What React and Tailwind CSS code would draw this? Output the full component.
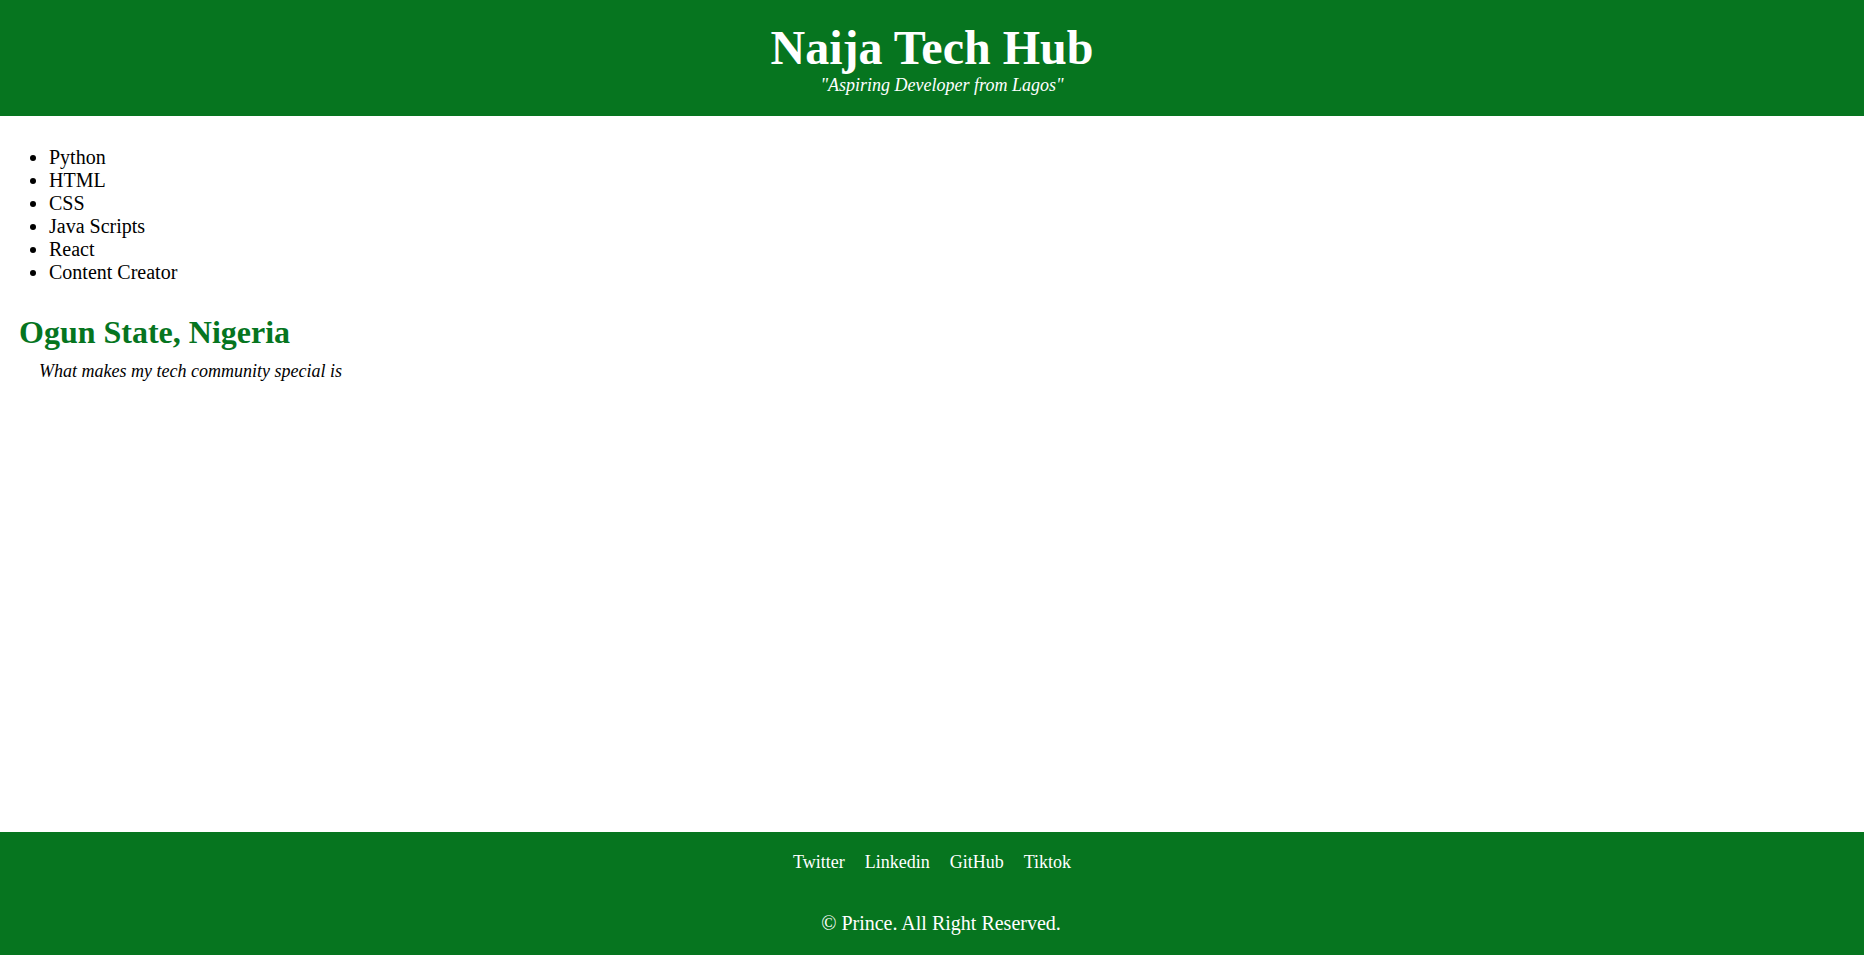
import React from 'react'

const skills = ['Python', 'HTML', 'CSS', 'Java Scripts', 'React', 'Content Creator']
const links = ['Twitter', 'Linkedin', 'GitHub', 'Tiktok']

function App() {
  return (
    <div className="min-h-screen flex flex-col bg-white text-black font-['Liberation_Serif','Times_New_Roman',serif]">
      {/* Header */}
      <header className="bg-[#06751f] text-white text-center pt-[21px] pb-[20px]">
        <h1 className="text-[48px] leading-[53px] font-bold">Naija Tech Hub</h1>
        <p className="text-[18px] leading-[22px] italic pl-[20px]">"Aspiring Developer from Lagos"</p>
      </header>

      {/* Main */}
      <main className="flex-1">
        <ul className="list-disc pl-[49px] mt-[30px] text-[20px] leading-[23px]">
          {skills.map((s) => (
            <li key={s}>{s}</li>
          ))}
        </ul>

        <section className="pl-[19px] mt-[30px]">
          <h2 className="text-[32px] leading-[36px] font-bold text-[#06751f]">Ogun State, Nigeria</h2>
          <p className="mt-[10px] ml-[20px] text-[18px] leading-[22px] italic">What makes my tech community special is</p>
        </section>
      </main>

      {/* Footer */}
      <footer className="bg-[#06751f] text-white text-center pt-[19px] pb-[20px]">
        <nav className="flex justify-center gap-[20px] text-[18px] leading-[22px]">
          {links.map((l) => (
            <a key={l} href="#">{l}</a>
          ))}
        </nav>
        <p className="mt-[38px] pl-[18px] text-[20px] leading-[24px]">© Prince. All Right Reserved.</p>
      </footer>
    </div>
  )
}

export default App
